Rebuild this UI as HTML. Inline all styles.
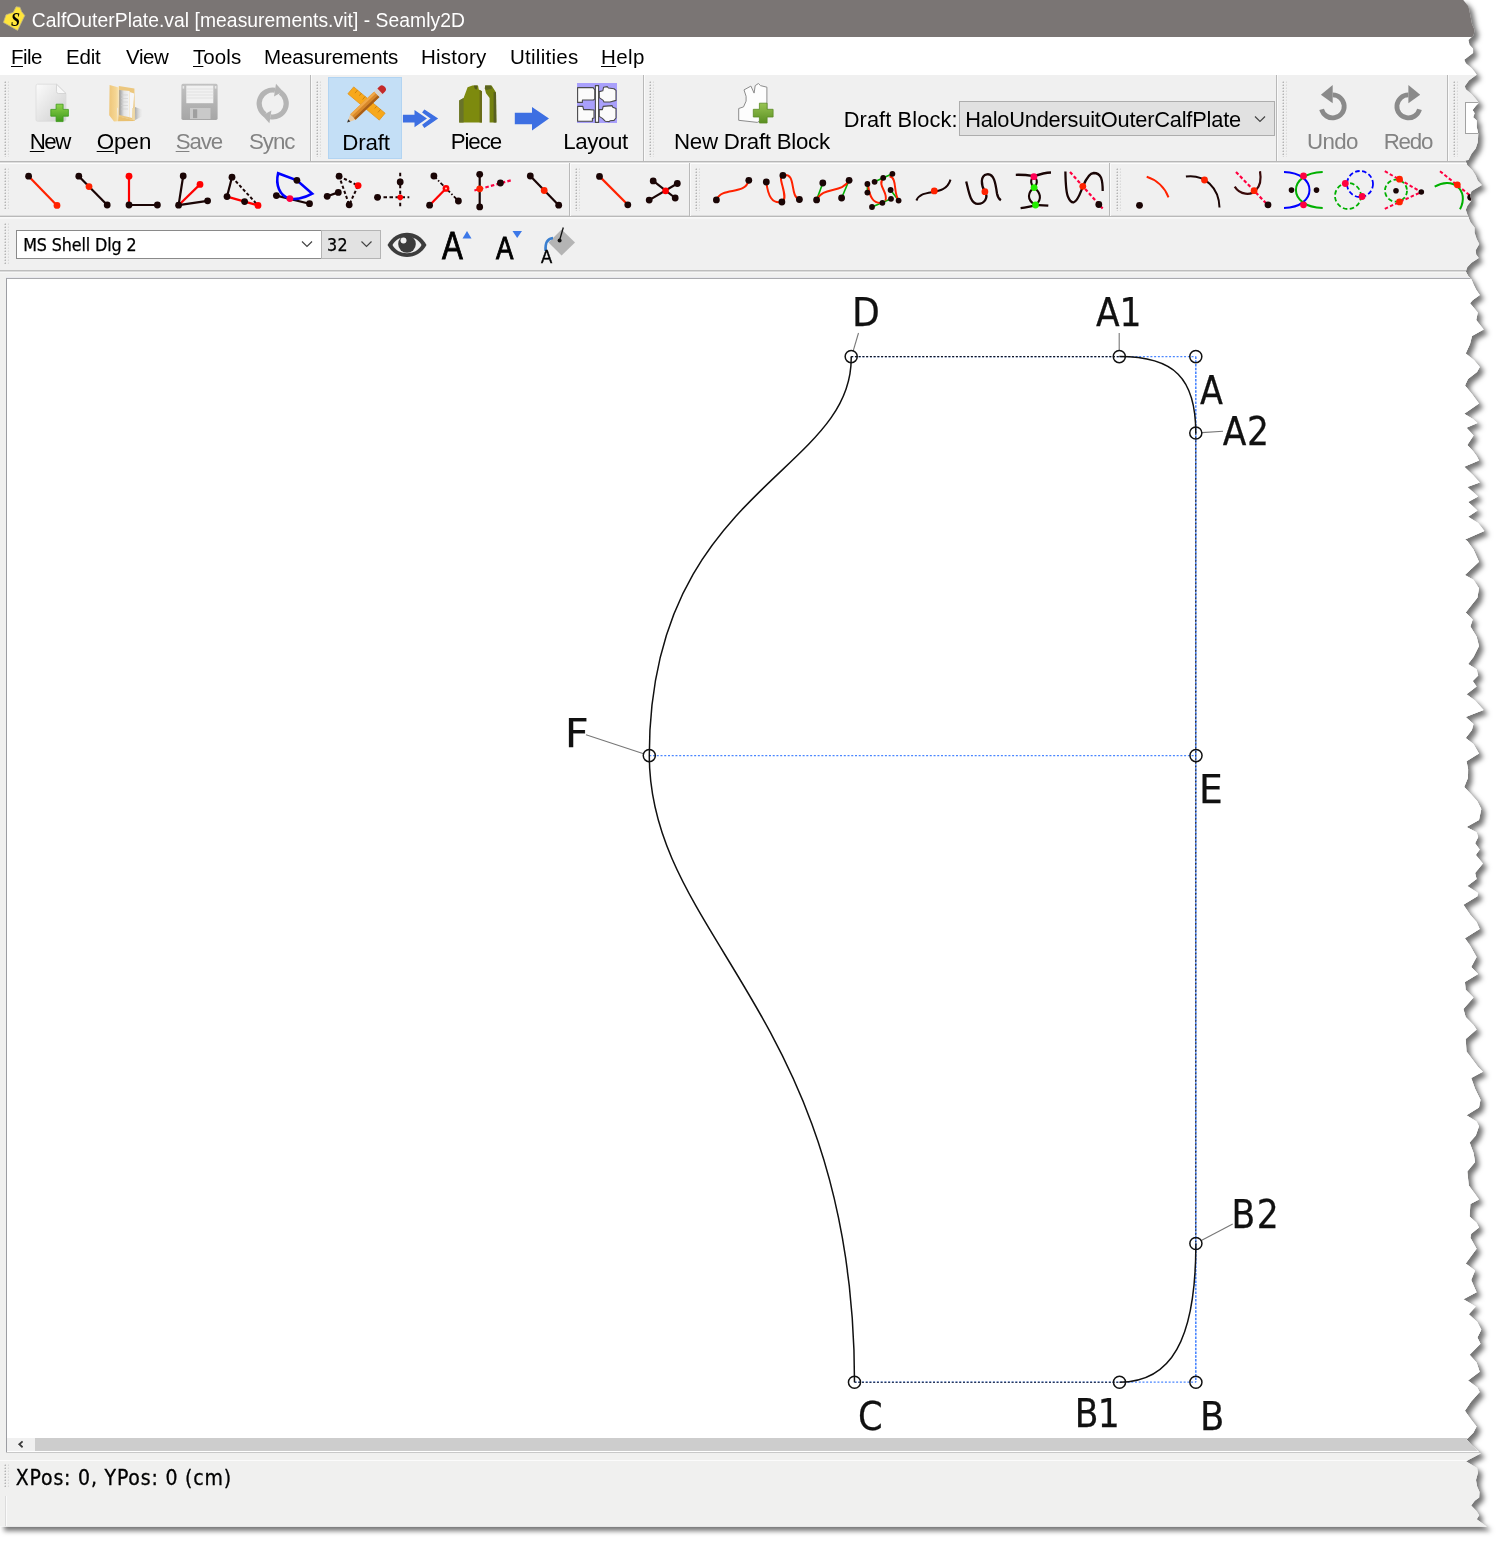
<!DOCTYPE html>
<html><head><meta charset="utf-8"><title>CalfOuterPlate.val [measurements.vit] - Seamly2D</title>
<style>
html,body{margin:0;padding:0;background:#fff;}
body{width:1500px;height:1541px;overflow:hidden;position:relative;font-family:"Liberation Sans",sans-serif;}
#w{position:absolute;left:0;top:0;width:1500px;height:1541px;overflow:hidden;background:#fff;}
.a{position:absolute;}
.t{position:absolute;white-space:nowrap;display:block;}
.t u{text-decoration:underline;text-decoration-thickness:1.2px;text-underline-offset:1.7px;}
.hd{position:absolute;width:6px;background-image:radial-gradient(circle at 1.2px 1.2px,#b4b4b4 0.45px,transparent 1.05px),radial-gradient(circle at 4.4px 1.2px,#dadada 0.45px,transparent 1.05px);background-size:6px 3px;}
svg{position:absolute;left:0;top:0;overflow:visible;}
#sh{position:absolute;left:0;top:0;width:1500px;height:1541px;filter:drop-shadow(4px 4px 2.8px rgba(0,0,0,0.54));}
#win{position:absolute;left:0;top:0;width:1500px;height:1541px;background:#f0f0f0;clip-path:polygon(0px 0px, 1463.2px 0.0px, 1468.4px 6.2px, 1470.0px 13.5px, 1472.0px 23.9px, 1474.6px 30.1px, 1473.6px 35.3px, 1468.4px 40.0px, 1469.5px 44.7px, 1473.1px 48.8px, 1473.1px 53.0px, 1464.3px 59.7px, 1465.8px 63.3px, 1471.5px 68.0px, 1474.6px 71.7px, 1476.7px 74.8px, 1468.9px 80.5px, 1464.8px 86.2px, 1465.8px 89.3px, 1471.5px 94.0px, 1475.7px 98.7px, 1478.8px 102.8px, 1475.7px 105.9px, 1472.6px 110.1px, 1474.6px 113.2px, 1473.1px 117.3px, 1476.7px 120.5px, 1476.7px 126.7px, 1478.3px 134.0px, 1477.8px 142.3px, 1475.7px 148.5px, 1471.5px 153.7px, 1468.4px 160.0px, 1465.3px 160.5px, 1467.4px 165.2px, 1472.6px 170.4px, 1475.7px 175.6px, 1477.8px 180.8px, 1481.9px 184.9px, 1471.5px 191.2px, 1470.0px 195.3px, 1471.5px 200.5px, 1467.4px 205.7px, 1465.8px 209.8px, 1467.9px 216.1px, 1470.5px 222.3px, 1474.6px 227.5px, 1474.6px 232.7px, 1476.7px 238.9px, 1479.3px 244.1px, 1475.7px 250.3px, 1476.2px 254.5px, 1478.8px 258.1px, 1471.5px 262.8px, 1467.4px 267.0px, 1465.8px 271.6px, 1468.4px 276.3px, 1471.5px 279.4px, 1473.6px 284.6px, 1476.2px 289.8px, 1479.8px 295.0px, 1472.6px 300.2px, 1470.0px 303.3px, 1473.6px 307.5px, 1477.8px 312.6px, 1476.2px 320.0px, 1483.7px 329.4px, 1472.0px 336.0px, 1470.0px 344.0px, 1465.7px 353.6px, 1474.0px 360.0px, 1479.8px 366.9px, 1477.0px 372.0px, 1468.0px 379.0px, 1465.0px 385.6px, 1472.0px 394.0px, 1479.0px 403.5px, 1464.2px 413.7px, 1473.0px 419.0px, 1477.5px 423.1px, 1466.5px 427.8px, 1473.6px 435.6px, 1467.3px 445.0px, 1473.0px 451.0px, 1476.7px 455.9px, 1479.0px 460.6px, 1464.2px 466.8px, 1473.0px 475.0px, 1479.8px 482.5px, 1467.3px 487.1px, 1478.2px 496.5px, 1468.1px 502.0px, 1477.5px 510.6px, 1468.1px 516.8px, 1478.2px 523.0px, 1484.4px 530.9px, 1465.0px 539.4px, 1467.3px 541.0px, 1473.5px 549.4px, 1479.0px 561.8px, 1464.9px 575.1px, 1473.5px 579.7px, 1479.0px 588.3px, 1477.4px 597.7px, 1471.2px 605.5px, 1465.7px 612.5px, 1472.7px 619.5px, 1470.4px 626.5px, 1476.6px 636.6px, 1479.0px 646.0px, 1473.5px 656.9px, 1468.1px 663.9px, 1476.6px 669.3px, 1478.2px 675.6px, 1472.7px 681.0px, 1476.6px 686.5px, 1466.5px 694.3px, 1475.1px 700.5px, 1483.6px 709.9px, 1465.7px 716.9px, 1473.5px 723.9px, 1471.9px 730.1px, 1465.7px 737.9px, 1473.5px 744.1px, 1479.0px 753.5px, 1466.5px 761.3px, 1468.1px 769.1px, 1468.0px 777.8px, 1464.2px 787.1px, 1471.2px 794.2px, 1477.4px 801.2px, 1481.3px 809.0px, 1479.0px 819.9px, 1466.5px 826.9px, 1476.6px 832.3px, 1478.2px 837.0px, 1475.1px 843.2px, 1479.7px 849.5px, 1475.8px 854.9px, 1482.9px 863.5px, 1475.1px 872.9px, 1476.6px 879.1px, 1467.3px 886.1px, 1478.2px 893.1px, 1477.4px 896.2px, 1463.4px 904.8px, 1470.4px 914.9px, 1476.6px 921.9px, 1479.7px 929.0px, 1464.9px 938.3px, 1470.4px 946.1px, 1476.6px 957.0px, 1471.2px 967.1px, 1478.2px 974.1px, 1464.9px 981.9px, 1465.7px 989.7px, 1473.5px 997.5px, 1463.4px 1009.0px, 1465.7px 1017.1px, 1473.5px 1024.9px, 1476.6px 1029.6px, 1465.7px 1039.0px, 1466.5px 1051.4px, 1473.5px 1060.8px, 1478.2px 1067.0px, 1482.9px 1071.7px, 1471.2px 1077.9px, 1475.1px 1088.8px, 1480.5px 1099.7px, 1479.0px 1107.5px, 1466.5px 1115.3px, 1476.6px 1121.6px, 1479.0px 1126.2px, 1475.8px 1135.6px, 1469.6px 1142.6px, 1473.5px 1152.7px, 1475.1px 1162.1px, 1467.3px 1171.4px, 1468.8px 1185.4px, 1475.1px 1194.0px, 1479.0px 1199.5px, 1470.4px 1204.1px, 1469.6px 1216.6px, 1476.6px 1222.8px, 1479.0px 1227.5px, 1471.2px 1233.8px, 1470.4px 1237.8px, 1476.6px 1248.7px, 1465.7px 1263.5px, 1475.1px 1270.5px, 1471.2px 1279.9px, 1476.6px 1292.3px, 1463.4px 1299.3px, 1475.8px 1306.4px, 1468.8px 1314.2px, 1477.4px 1321.9px, 1481.3px 1329.7px, 1477.4px 1337.5px, 1480.5px 1343.8px, 1469.6px 1354.7px, 1476.6px 1362.5px, 1479.7px 1371.8px, 1468.0px 1380.4px, 1477.4px 1387.4px, 1479.7px 1392.1px, 1471.2px 1401.4px, 1464.9px 1410.8px, 1470.4px 1418.6px, 1476.6px 1426.4px, 1473.5px 1432.6px, 1466.5px 1439.6px, 1472.0px 1445.6px, 1480.8px 1453.6px, 1466.0px 1461.2px, 1477.2px 1468.0px, 1478.0px 1472.8px, 1476.0px 1480.0px, 1477.2px 1486.4px, 1479.6px 1492.0px, 1479.2px 1497.6px, 1474.8px 1500.8px, 1471.2px 1505.6px, 1476.8px 1511.2px, 1479.2px 1515.2px, 1476.8px 1519.2px, 1486.8px 1526.5px, 0px 1526.5px);}
</style></head><body><div id="w"><div id="sh"><div id="win">

<!-- title bar -->
<div class="a" style="left:0;top:0;width:1500px;height:37px;background:#7a7574;"></div>
<!-- menu bar -->
<div class="a" style="left:0;top:37px;width:1500px;height:38px;background:#fff;"></div>
<!-- toolbars background -->
<div class="a" style="left:0;top:75px;width:1500px;height:203px;background:#f0f0f0;"></div>
<div class="a" style="left:0;top:161px;width:1500px;height:1px;background:#b7b7b7;"></div>
<div class="a" style="left:0;top:162px;width:1500px;height:1px;background:#dedede;"></div>
<div class="a" style="left:0;top:163px;width:1500px;height:1px;background:#fcfcfc;"></div>
<div class="a" style="left:0;top:215px;width:1500px;height:1px;background:#dcdcdc;"></div>
<div class="a" style="left:0;top:216px;width:1500px;height:1px;background:#b9b9b9;"></div>
<div class="a" style="left:0;top:217px;width:1500px;height:1px;background:#f9f9f9;"></div>
<div class="a" style="left:0;top:218px;width:1500px;height:1px;background:#f6f6f6;"></div>
<div class="a" style="left:0;top:270px;width:1500px;height:1px;background:#bdbdbd;"></div>
<div class="a" style="left:0;top:271px;width:1500px;height:1px;background:#dadada;"></div>
<div class="a" style="left:0;top:272px;width:1500px;height:1px;background:#f6f6f6;"></div>
<!-- toolbar 1 separators -->
<div class="a" style="left:310px;top:75px;width:1px;height:86px;background:#b9b9b9;"></div>
<div class="a" style="left:311px;top:75px;width:1px;height:86px;background:#fafafa;"></div>
<div class="a" style="left:643px;top:75px;width:1px;height:86px;background:#b9b9b9;"></div>
<div class="a" style="left:644px;top:75px;width:1px;height:86px;background:#fafafa;"></div>
<div class="a" style="left:1276px;top:75px;width:1px;height:86px;background:#b9b9b9;"></div>
<div class="a" style="left:1277px;top:75px;width:1px;height:86px;background:#fafafa;"></div>
<div class="a" style="left:1447px;top:75px;width:1px;height:86px;background:#b9b9b9;"></div>
<div class="a" style="left:1448px;top:75px;width:1px;height:86px;background:#fafafa;"></div>
<!-- row2 separators -->
<div class="a" style="left:569px;top:163px;width:1px;height:53px;background:#b9b9b9;"></div>
<div class="a" style="left:570px;top:163px;width:1px;height:53px;background:#fafafa;"></div>
<div class="a" style="left:689px;top:163px;width:1px;height:53px;background:#b9b9b9;"></div>
<div class="a" style="left:690px;top:163px;width:1px;height:53px;background:#fafafa;"></div>
<div class="a" style="left:1109px;top:163px;width:1px;height:53px;background:#b9b9b9;"></div>
<div class="a" style="left:1110px;top:163px;width:1px;height:53px;background:#fafafa;"></div>
<div class="hd" style="left:575px;top:168px;height:43px;"></div>
<div class="hd" style="left:695px;top:168px;height:43px;"></div>
<div class="hd" style="left:1116px;top:168px;height:43px;"></div>
<!-- handles -->
<div class="hd" style="left:4px;top:81px;height:76px;"></div>
<div class="hd" style="left:316px;top:81px;height:76px;"></div>
<div class="hd" style="left:649px;top:81px;height:76px;"></div>
<div class="hd" style="left:1282px;top:81px;height:76px;"></div>
<div class="hd" style="left:1453px;top:81px;height:76px;"></div>
<div class="hd" style="left:4px;top:168px;height:42px;"></div>
<div class="hd" style="left:4px;top:223px;height:42px;"></div>
<!-- Draft selected -->
<div class="a" style="left:328px;top:77px;width:74px;height:82px;background:#c4dff6;border:1px solid #b2d4f2;box-sizing:border-box;"></div>
<!-- draft block combo -->
<div class="a" style="left:959px;top:101px;width:316px;height:35px;background:#e1e1e1;border:1px solid #adadad;box-sizing:border-box;"></div>
<!-- little box at far right -->
<div class="a" style="left:1465px;top:102px;width:40px;height:31.5px;background:#fff;border:1px solid #a2a2a2;box-sizing:border-box;"></div>
<!-- font combo -->
<div class="a" style="left:16px;top:230px;width:306px;height:29px;background:#fff;border:1px solid #8a8a8a;box-sizing:border-box;"></div>
<div class="a" style="left:321px;top:230px;width:60px;height:29px;background:#e2e2e2;border:1px solid #b4b4b4;box-sizing:border-box;"></div>
<!-- canvas frame -->
<div class="a" style="left:0;top:273px;width:1500px;height:1260px;background:#f0f0ef;"></div>
<div class="a" style="left:6px;top:277px;width:1500px;height:1px;background:#e9e9ef;"></div>
<div class="a" style="left:6px;top:278px;width:1500px;height:1175px;background:#fff;border:1px solid #9c9da2;border-top-color:#a9aaae;border-bottom-color:#a0a0a0;box-sizing:border-box;"></div>
<!-- scrollbar -->
<div class="a" style="left:7px;top:1438px;width:1493px;height:13px;background:#cdcdcd;"></div>
<div class="a" style="left:7px;top:1438px;width:28px;height:13px;background:#f0f0f0;"></div>
<div class="a" style="left:6px;top:1452px;width:1494px;height:1px;background:#c8c8c8;"></div>
<!-- status bar -->
<div class="a" style="left:0;top:1459.5px;width:1500px;height:1px;background:#fbfbfb;"></div>
<div class="hd" style="left:4px;top:1464px;height:23px;"></div>
<div class="a" style="left:5px;top:1496px;width:1px;height:30px;background:#dcdcdc;"></div>
<div class="a" style="left:6px;top:1496px;width:1px;height:30px;background:#fafafa;"></div>
<div class="a" style="left:0;top:1525.5px;width:1500px;height:1px;background:#fcfcfc;"></div>

<svg width="1500" height="1541" viewBox="0 0 1500 1541" fill="none" stroke-linecap="butt">
<path d="M28.6 176.2L57 205.4" stroke="#ff2200" stroke-width="2.2"/>
<circle cx="28.6" cy="176.2" r="3.4" fill="#1a0505"/>
<circle cx="57" cy="205.4" r="3.4" fill="#ff2200"/>
<path d="M78.8 176.2L107.2 205" stroke="#1a0505" stroke-width="2.2"/>
<circle cx="78.8" cy="176.2" r="3.4" fill="#1a0505"/>
<circle cx="107.2" cy="205" r="3.4" fill="#1a0505"/>
<circle cx="89" cy="186.6" r="3.4" fill="#ff2200"/>
<path d="M129 176.2L129 205" stroke="#ff0000" stroke-width="2.2"/>
<path d="M129 205L157.4 205" stroke="#1a0505" stroke-width="2.2"/>
<circle cx="129" cy="176.2" r="3.4" fill="#ff0000"/>
<circle cx="129" cy="205" r="3.4" fill="#1a0505"/>
<circle cx="157.4" cy="205" r="3.4" fill="#1a0505"/>
<path d="M178.6 205.2L183.2 176" stroke="#1a0505" stroke-width="2.2"/>
<path d="M178.6 205.2L207.6 200.8" stroke="#1a0505" stroke-width="2.2"/>
<path d="M178.6 205.2L200 184.4" stroke="#ff0000" stroke-width="2.2"/>
<circle cx="183.2" cy="176" r="3.4" fill="#1a0505"/>
<circle cx="207.6" cy="200.8" r="3.4" fill="#1a0505"/>
<circle cx="178.6" cy="205.2" r="3.4" fill="#1a0505"/>
<circle cx="200" cy="184.4" r="3.4" fill="#ff0000"/>
<path d="M232 177.2L227 196.6" stroke="#1a0505" stroke-width="2.2"/>
<path d="M227 196.6L258 205.4" stroke="#ff0000" stroke-width="2.2"/>
<path d="M232 177.2L258 205.4" stroke="#1a0505" stroke-width="2" stroke-dasharray="3.2 2.2"/>
<circle cx="232" cy="177.2" r="3.4" fill="#1a0505"/>
<circle cx="227" cy="196.6" r="3.4" fill="#1a0505"/>
<circle cx="244.6" cy="201.6" r="3.4" fill="#1a0505"/>
<circle cx="258" cy="205.4" r="3.4" fill="#ff0000"/>
<path d="M276.4 195.6L309.5 203.7" stroke="#1a0505" stroke-width="2.2"/>
<path d="M278.1 173.2L296.9 180.3L312.3 193.7C303 199 294 199.5 289.9 198.6C279 196 275.5 184 278.1 173.2Z" stroke="#0000ff" stroke-width="2.6"/>
<circle cx="296.9" cy="180.3" r="3.4" fill="#1a0505"/>
<circle cx="276.4" cy="195.6" r="3.4" fill="#1a0505"/>
<circle cx="309.5" cy="203.7" r="3.4" fill="#1a0505"/>
<circle cx="289.9" cy="198.6" r="3.4" fill="#ff0040"/>
<path d="M339.1 176.2L358.1 185.6L349.2 204.8Z" stroke="#1a0505" stroke-width="2" stroke-dasharray="3.2 2.2"/>
<path d="M327.2 196.3L338.3 192.4" stroke="#1a0505" stroke-width="2.2"/>
<circle cx="339.1" cy="176.2" r="3.4" fill="#1a0505"/>
<circle cx="349.2" cy="204.8" r="3.4" fill="#1a0505"/>
<circle cx="327.2" cy="196.3" r="3.4" fill="#1a0505"/>
<circle cx="338.3" cy="192.4" r="3.4" fill="#1a0505"/>
<circle cx="358.1" cy="185.6" r="3.4" fill="#ff0000"/>
<path d="M400.2 172.8L400.2 206.5" stroke="#1a0505" stroke-width="2" stroke-dasharray="3.5 2.5"/>
<path d="M377.5 197.3L409.3 197.3" stroke="#1a0505" stroke-width="2" stroke-dasharray="3.5 2.5"/>
<circle cx="400.2" cy="182" r="3.4" fill="#1a0505"/>
<circle cx="377.5" cy="197.3" r="3.4" fill="#1a0505"/>
<circle cx="400.2" cy="197.3" r="2.8" fill="#ff0000"/>
<path d="M433.9 176L458.4 201" stroke="#1a0505" stroke-width="1.8" stroke-dasharray="4 2 1.5 2"/>
<path d="M429.6 205.2L446 188.4" stroke="#ff0000" stroke-width="2.2"/>
<circle cx="433.9" cy="176" r="3.4" fill="#1a0505"/>
<circle cx="458.4" cy="201" r="3.4" fill="#1a0505"/>
<circle cx="429.6" cy="205.2" r="3.4" fill="#1a0505"/>
<circle cx="446" cy="188.4" r="3.4" fill="#ff0000"/>
<circle cx="446" cy="188.4" r="1" fill="#ffd0c0"/>
<path d="M479.7 174.3L479.7 206.9" stroke="#1a0505" stroke-width="2.2"/>
<path d="M474.4 190.5L512.8 179.8" stroke="#ff0040" stroke-width="2.2" stroke-dasharray="3.5 2.2"/>
<circle cx="479.7" cy="174.3" r="3.4" fill="#1a0505"/>
<circle cx="479.7" cy="206.9" r="3.4" fill="#1a0505"/>
<circle cx="500.4" cy="183" r="3.4" fill="#1a0505"/>
<circle cx="479.7" cy="188.8" r="3.4" fill="#ff2200"/>
<path d="M530.3 176L558.7 205.2" stroke="#1a0505" stroke-width="2.2"/>
<circle cx="530.3" cy="176" r="3.4" fill="#1a0505"/>
<circle cx="558.7" cy="205.2" r="3.4" fill="#1a0505"/>
<circle cx="544.2" cy="190.5" r="3.4" fill="#ff2200"/>
<path d="M599.5 176.4L627.8 204.8" stroke="#ff2200" stroke-width="2.2"/>
<circle cx="599.5" cy="176.4" r="3.4" fill="#1a0505"/>
<circle cx="627.8" cy="204.8" r="3.4" fill="#1a0505"/>
<path d="M653.2 180.9L675.2 198" stroke="#1a0505" stroke-width="2.2"/>
<path d="M677.3 183.5L649.2 200.1" stroke="#1a0505" stroke-width="2.2"/>
<circle cx="653.2" cy="180.9" r="3.4" fill="#1a0505"/>
<circle cx="677.3" cy="183.5" r="3.4" fill="#1a0505"/>
<circle cx="649.2" cy="200.1" r="3.4" fill="#1a0505"/>
<circle cx="675.2" cy="198" r="3.4" fill="#1a0505"/>
<circle cx="665.6" cy="190.9" r="3.3" fill="#ff0000"/>
<path d="M716.4 199.9C722 186 745 196 748.8 180.3" stroke="#ff2200" stroke-width="2"/>
<circle cx="716.4" cy="199.9" r="3.4" fill="#1a0505"/>
<circle cx="748.8" cy="180.3" r="3.4" fill="#1a0505"/>
<path d="M766.3 182C768 196 772 204 781.9 202C790 198 776 176 782.9 175.4C797 172 789 196 799.4 199.5" stroke="#ff2200" stroke-width="2"/>
<circle cx="766.3" cy="182" r="3.4" fill="#1a0505"/>
<circle cx="782.9" cy="175.4" r="3.4" fill="#1a0505"/>
<circle cx="781.9" cy="202" r="3.4" fill="#1a0505"/>
<circle cx="799.4" cy="199.5" r="3.4" fill="#1a0505"/>
<path d="M816.6 199.9L822.8 183" stroke="#00b000" stroke-width="1.6"/>
<path d="M841.6 198L849.1 180.3" stroke="#00b000" stroke-width="1.6"/>
<path d="M816.6 199.9C823 186 842 194 849.1 180.3" stroke="#ff2200" stroke-width="2"/>
<circle cx="822.8" cy="183" r="3.4" fill="#1a0505"/>
<circle cx="849.1" cy="180.3" r="3.4" fill="#1a0505"/>
<circle cx="816.6" cy="199.9" r="3.4" fill="#1a0505"/>
<circle cx="841.6" cy="198" r="3.4" fill="#1a0505"/>
<path d="M867.4 184L867.4 192.6M874.6 181.8L892.4 173.8M890.6 190L898.6 200.6M872 207L891 198.8" stroke="#00b000" stroke-width="1.6"/>
<path d="M868.2 186C869.5 196 873 204.5 882.4 202.8M883.2 178.5C876.5 185 889.5 194 885.2 200.6M889.5 176.3C897.5 178 893 192 898.6 200.6" stroke="#ff2200" stroke-width="2"/>
<circle cx="867.4" cy="184" r="2.9" fill="#1a0505"/>
<circle cx="874.6" cy="181.8" r="2.9" fill="#1a0505"/>
<circle cx="883.2" cy="177.8" r="2.9" fill="#1a0505"/>
<circle cx="892.4" cy="173.8" r="2.9" fill="#1a0505"/>
<circle cx="867.4" cy="192.6" r="2.9" fill="#1a0505"/>
<circle cx="890.6" cy="190" r="2.9" fill="#1a0505"/>
<circle cx="891" cy="198.8" r="2.9" fill="#1a0505"/>
<circle cx="898.6" cy="200.6" r="2.9" fill="#1a0505"/>
<circle cx="882.4" cy="202.8" r="2.9" fill="#1a0505"/>
<circle cx="872" cy="207" r="2.9" fill="#1a0505"/>
<path d="M916.4 200.5C922 187 945 198 950.5 179.6" stroke="#1a0505" stroke-width="2"/>
<circle cx="934.3" cy="190.9" r="3.4" fill="#ff2200"/>
<path d="M966.2 181.5C968.5 190 970 203.9 977.9 203.9C985 203.9 988.5 197 984.9 191.7C981 185 980 175.5 987 174.3C994 173.3 995.5 183 997 193.5C997.6 197 999 199 1000.9 200.2" stroke="#1a0505" stroke-width="2.3"/>
<circle cx="984.9" cy="191.7" r="3.4" fill="#ff2200"/>
<path d="M1015.8 174.8C1022 174.6 1028 175.2 1033.9 176.2C1039 174.5 1045 172.8 1051 172.5M1020.6 208.2C1026 207.6 1031 206 1035.5 205.3C1040 205 1044 205.3 1048.3 205.7" stroke="#1a0505" stroke-width="2.3"/>
<path d="M1033.9 176.7C1029.5 180 1031 185 1034.1 187.6C1037 185 1038.5 180 1033.9 176.7M1034.1 187.6C1028 192 1026 200 1035.5 205C1043 199 1040 192 1034.1 187.6" stroke="#1a0505" stroke-width="2.1"/>
<circle cx="1033.9" cy="176.7" r="3.4" fill="#ff0055"/>
<circle cx="1034.1" cy="187.6" r="3.4" fill="#22ee00"/>
<circle cx="1035.5" cy="205" r="3.4" fill="#22ee00"/>
<path d="M1065.4 171.6C1065.6 184 1066 193 1068.1 197C1070 201.5 1072 202.5 1073.6 202.3C1078 201.5 1080.5 192 1083 186.3C1086 179 1089 173.2 1093.7 173C1098 173 1100 175.5 1101.1 177.8C1102.3 181 1102.7 186 1102.7 191.1" stroke="#1a0505" stroke-width="2.3"/>
<path d="M1070 171.9L1103.3 209.3" stroke="#ff0040" stroke-width="2.2" stroke-dasharray="3.5 2.2"/>
<circle cx="1082.8" cy="186.3" r="3.4" fill="#ff2200"/>
<circle cx="1098.8" cy="204.5" r="3.4" fill="#1a0505"/>
<path d="M1146.7 176.8C1157 180 1165 188 1168.5 197.3" stroke="#ff2200" stroke-width="2"/>
<circle cx="1139.5" cy="205.3" r="3.4" fill="#1a0505"/>
<path d="M1185.9 176.5C1205 174 1219 188 1219.5 207.5" stroke="#1a0505" stroke-width="2"/>
<circle cx="1204.5" cy="180" r="3.4" fill="#ff2200"/>
<path d="M1234.7 186.7C1240 195 1251 196 1256 190C1261 185 1261 177 1260 171.2" stroke="#3a0a0a" stroke-width="2.2"/>
<path d="M1236 172L1270.7 208" stroke="#ff0040" stroke-width="2.2" stroke-dasharray="3.5 2.2"/>
<circle cx="1254.1" cy="190.7" r="3.4" fill="#ff2200"/>
<circle cx="1268" cy="204.8" r="3.4" fill="#1a0505"/>
<path d="M1284 172C1318 173 1318 207 1284 208" stroke="#0000ff" stroke-width="2"/>
<path d="M1322.7 172C1287 173 1287 207 1322.7 208" stroke="#00b000" stroke-width="2"/>
<circle cx="1291.5" cy="190.1" r="2.8" fill="#1a0505"/>
<circle cx="1316.5" cy="190.1" r="2.8" fill="#1a0505"/>
<circle cx="1303.5" cy="176" r="3.4" fill="#ff0040"/>
<circle cx="1303.5" cy="204.8" r="3.4" fill="#ff0040"/>
<circle cx="1360" cy="184" r="13" stroke="#0000ff" stroke-width="1.8" stroke-dasharray="4.5 2.5"/>
<circle cx="1348" cy="196" r="13" stroke="#00b000" stroke-width="1.8" stroke-dasharray="4.5 2.5"/>
<circle cx="1345.3" cy="183.5" r="3.4" fill="#ff0040"/>
<circle cx="1362.1" cy="196.5" r="3.4" fill="#ff0040"/>
<circle cx="1396" cy="190.7" r="11" stroke="#00b000" stroke-width="1.8" stroke-dasharray="4.5 2.5"/>
<path d="M1384.8 171.2L1421.3 192" stroke="#ff0040" stroke-width="2" stroke-dasharray="3.5 2.2"/>
<path d="M1384.8 208.8L1421.3 192" stroke="#ff0040" stroke-width="2" stroke-dasharray="3.5 2.2"/>
<circle cx="1396" cy="190.7" r="2.8" fill="#1a0505"/>
<circle cx="1421.3" cy="192" r="2.8" fill="#1a0505"/>
<circle cx="1399.5" cy="179.2" r="3.4" fill="#ff2200"/>
<circle cx="1399.5" cy="201.9" r="3.4" fill="#ff2200"/>
<path d="M1434.7 186.7C1452 176 1470 190 1460 209.3" stroke="#00b000" stroke-width="2"/>
<path d="M1440 171.2L1470.7 196" stroke="#ff0040" stroke-width="2" stroke-dasharray="3.5 2.2"/>
<circle cx="1457.3" cy="184.8" r="3.4" fill="#ff2200"/>
<circle cx="1470.7" cy="197.3" r="3.4" fill="#1a0505"/>
<path d="M302 241.5L307 246.5L312 241.5" stroke="#444" stroke-width="1.2"/>
<path d="M361.5 241.5L366.5 246.5L371.5 241.5" stroke="#444" stroke-width="1.2"/>
<path d="M1255 116.5L1260 121.5L1265 116.5" stroke="#444" stroke-width="1.2"/>
<path d="M387.5 245C396 228.5 418 228.5 426.5 245C418 261 396 261 387.5 245Z" fill="#3c3c3c"/>
<path d="M392.5 245C398 234 416 234 421.5 245C416 256 398 256 392.5 245Z" fill="#f0f0f0"/>
<circle cx="407" cy="244" r="8.8" fill="#3c3c3c"/><circle cx="403.5" cy="240.5" r="3" fill="#f0f0f0"/>
<path d="M462.5 238.5L467 231L471.5 238.5Z" fill="#3c78e8"/>
<path d="M512.5 231L522 231L517.2 238Z" fill="#3c78e8"/>
<path d="M561.6 229.5L575 242.5L561.6 255.5L548.5 242.5Z" fill="#b4b4b4"/>
<path d="M545.6 251C545 243 548 238.5 553 238" stroke="#3a7fd0" stroke-width="2.6"/>
<path d="M563.3 227.5L559.8 239.5" stroke="#111" stroke-width="1.3"/>
<circle cx="559.6" cy="240.5" r="2" fill="#111"/>
<path d="M3.4 22.4L6 14.8L13.2 12.4L16 6.8L20 7.2L21.6 11.6L24.8 15.6L17.6 30.4Z" fill="#ffe53b" stroke="#b9b08a" stroke-width="0.8"/>
<path d="M22.6 1441.4L19.3 1444.3L22.6 1447.2" stroke="#3c3c3c" stroke-width="1.8"/>
</svg>
<svg width="1500" height="1541" viewBox="0 0 1500 1541" fill="none">
<defs>
<linearGradient id="gp" x1="0" y1="0" x2="1" y2="1"><stop offset="0" stop-color="#fbfbfb"/><stop offset="1" stop-color="#cfcfcf"/></linearGradient>
<linearGradient id="gg" x1="0" y1="0" x2="0" y2="1"><stop offset="0" stop-color="#8ed24a"/><stop offset="1" stop-color="#3f9a1c"/></linearGradient>
<linearGradient id="gg2" x1="0" y1="0" x2="0" y2="1"><stop offset="0" stop-color="#98c452"/><stop offset="1" stop-color="#5a8f22"/></linearGradient>
<linearGradient id="gf" x1="0" y1="0" x2="1" y2="0"><stop offset="0" stop-color="#f6dc9e"/><stop offset="1" stop-color="#e0b465"/></linearGradient>
<linearGradient id="gs" x1="0" y1="0" x2="0" y2="1"><stop offset="0" stop-color="#c2c2c2"/><stop offset="1" stop-color="#a6a6a6"/></linearGradient>
</defs>
<path d="M37.5 84.2H56.5L66 93.5V119.5Q66 121.3 64 121.3H37.5Q36 121.3 36 119.5V86Q36 84.2 37.5 84.2Z" fill="url(#gp)" stroke="#dcdcdc" stroke-width="0.8"/>
<path d="M56.5 84.2V91.5Q56.5 93.5 58.5 93.5H66Z" fill="#f8f8f8" stroke="#cfcfcf" stroke-width="0.8"/>
<path d="M56.1 104.2H63.1V109.4H68.4V116.2H63.1V121.6H56.1V116.2H50.8V109.4H56.1Z" fill="url(#gg)" stroke="#3c9a1a" stroke-width="0.8" stroke-linejoin="round"/>
<defs><linearGradient id="gpp" x1="0" y1="0" x2="1" y2="0"><stop offset="0" stop-color="#9a9a9a"/><stop offset="0.45" stop-color="#e4e4e4"/><stop offset="1" stop-color="#f4f4f4"/></linearGradient><linearGradient id="gsh" x1="0" y1="0" x2="1" y2="0"><stop offset="0" stop-color="#a8a8a8"/><stop offset="1" stop-color="#e6e6e6" stop-opacity="0.2"/></linearGradient><linearGradient id="gfl" x1="0" y1="0" x2="1" y2="0"><stop offset="0" stop-color="#eec67a"/><stop offset="0.7" stop-color="#f5d694"/><stop offset="1" stop-color="#f9e5b4"/></linearGradient></defs>
<path d="M135 107L142 109.5V116.5L135.2 120Z" fill="url(#gsh)"/>
<path d="M118.8 86L134.4 88.4L134.9 120.4L118.4 116.4Z" fill="#ecc77e"/>
<path d="M119.3 90L129.6 91V117.2L119.3 115Z" fill="url(#gpp)"/>
<path d="M129.6 92L134.2 93.5L133 110L132 118L129.6 117.2Z" fill="#f6f6f8"/>
<path d="M121 95h7M121 98.5h7M121 102h7M121 105.5h7M121 109h7" stroke="#cdcdcd" stroke-width="0.9" opacity="0.7"/>
<path d="M118.4 116.2L134.9 120.4V121L118 121.2Z" fill="#e9c070"/>
<path d="M132.2 108L134.8 108.5V120.4L132.2 119.6Z" fill="#eed9a8"/>
<path d="M109.6 85L118.8 87.6L118.3 107L117.2 108.5L118 121.2L114 121.6L109.2 115.2Z" fill="url(#gfl)"/>
<path d="M183 83.8H216Q217.6 83.8 217.6 85.5V118.3Q217.6 120 216 120H183Q181.4 120 181.4 118.3V85.5Q181.4 83.8 183 83.8Z" fill="url(#gs)"/>
<rect x="186.3" y="85.6" width="27" height="17.6" fill="#f1f1f1"/>
<path d="M186.3 89h27M186.3 92h27M186.3 95h27M186.3 98h27" stroke="#dedede" stroke-width="0.8"/>
<rect x="190" y="108" width="20.5" height="11" fill="#c9c9c9"/><rect x="193" y="109.3" width="4.2" height="8.8" fill="#9f9f9f"/>
<rect x="182.6" y="86" width="1.6" height="2.6" fill="#e8e8e8"/><rect x="214.8" y="86" width="1.6" height="2.6" fill="#e8e8e8"/>
<g stroke="#b4b4b4" stroke-width="5.2" fill="none"><path d="M265 114.6A13.5 13.5 0 0 1 275 90.2"/><path d="M280.4 92.4A13.5 13.5 0 0 1 270.4 116.8"/></g>
<path d="M276 83.8L274 96.6L283 91.6Z" fill="#b4b4b4"/><path d="M269.4 123.2L271.4 110.4L262.4 115.4Z" fill="#b4b4b4"/>
<g transform="rotate(40 366.5 103.5)"><rect x="346" y="99" width="41" height="9" fill="#f7a81b" stroke="#e08f10" stroke-width="0.7"/><path d="M351 99v4M356 99v3M361 99v4M366 99v3M371 99v4M376 99v3M381 99v4" stroke="#c77d0a" stroke-width="0.8"/></g>
<g transform="rotate(-43.5 366 104.5)"><path d="M340 104.5L348 100.7V108.3Z" fill="#e9c9a0"/><path d="M340 104.5L343 103V106Z" fill="#333"/><rect x="348" y="100.7" width="33" height="7.6" fill="#d8882a"/><rect x="348" y="100.7" width="33" height="2.5" fill="#f0a848"/><rect x="348" y="106" width="33" height="2.3" fill="#a85f18"/><rect x="381" y="100.7" width="4.3" height="7.6" fill="#d4d4d4"/><path d="M385.3 100.7H388.5Q391.8 100.7 391.8 104.5Q391.8 108.3 388.5 108.3H385.3Z" fill="#c42a2a"/></g>
<path d="M402.9 114.8H414.5V110.1L427 118.6L414.5 127.2V122.5H402.9Z" fill="#3d6fe2"/>
<path d="M424.5 110.3L437 118.6L424.5 127L423 125L431.5 118.6L423 112.3Z" fill="#3d6fe2" stroke="#3d6fe2" stroke-width="1.3" stroke-linejoin="miter"/>
<path d="M514.8 112.7H532V106.9L549 118.6L532 130.4V124.3H514.8Z" fill="#3d6fe2"/>
<path d="M459.2 122.4V100.4L463.6 98L467.6 87.2L472.4 85.4H478L478.8 89.6L482 91.2V122.4Z" fill="#7d8a0e"/>
<path d="M459.2 122.4V100.4L463.6 98V122.4Z" fill="#69732a"/>
<path d="M479.6 90L482 91.2V122.4H479.6Z" fill="#6a6c18"/>
<path d="M473.6 85.4H477.4L477 89.4L475 89Z" fill="#565b1c"/>
<path d="M485.2 85.6H491.6L494 89.2L496 92.4L496.4 122.4H489.6V98L486 93.2L484.8 88.4Z" fill="#74820f"/>
<path d="M493.6 92L496 92.4L496.4 122.4H493.6Z" fill="#585f20"/>
<path d="M485.2 85.6H491L492 88.5L486.5 90L484.8 88.4Z" fill="#5b6420"/>
<rect x="577" y="83" width="40" height="40" fill="#a9a0fb"/>
<g fill="#fbfbfb" stroke="#4a4a4a" stroke-width="1.1" stroke-linejoin="round"><path d="M577.6 87.6H593.2L594.8 90V98.8L593.6 100H582.4V102.4H577.6Z"/><path d="M577.6 106.4H582.8L583.6 109.6H589.2L594 110V118L592.4 118.4V121.2H577.6Z"/><path d="M599.2 91.6L602.8 90.8L603.6 87.2L607.2 86.6L608.4 88L614 88.8L616 90.4V100.4L610 102H604L603.2 100.4L599.2 97.6Z"/><path d="M599.2 109.6H602.4L603.2 106.4L612 105.6L612.8 107.2L616 108.4V118L614 120.4L610 120.8L609.2 121.6L605.2 121.2L602.4 118.4L599.2 116.4Z"/><rect x="595.4" y="85.6" width="3.2" height="36.8"/></g>
<path d="M738.7 120.3V108.5L743.5 106.9L746.1 101.1V96.3L744 89.9L750.9 86.1L754.1 93.1L755.2 85.6L758.4 83.5L760.5 85.6L766.9 87.2V117L757.3 122.4Z" fill="#fdfdfd" stroke="#8c8c8c" stroke-width="1" stroke-linejoin="round"/>
<path d="M759.4 103.2H767.1V109.3H773.1V117H767.1V123H759.4V117H753.3V109.3H759.4Z" fill="url(#gg2)" stroke="#5b8c25" stroke-width="0.8" stroke-linejoin="round"/>
<path d="M1332.7 94.9A11.5 11.5 0 1 1 1321.6 109.4" stroke="#8a8a8a" stroke-width="4.8"/><path d="M1320.9 94.7L1332.7 85.1V103.2Z" fill="#8a8a8a"/>
<path d="M1408.4 94.9A11.5 11.5 0 1 0 1419.5 109.4" stroke="#8a8a8a" stroke-width="4.8"/><path d="M1420.2 94.7L1408.4 85.1V103.2Z" fill="#8a8a8a"/>
</svg>
<svg width="1500" height="1541" viewBox="0 0 1500 1541" fill="none">
<g stroke="#4a86ff" stroke-width="1.3" stroke-dasharray="2 1.74">
<path d="M851.2 356.6H1195.8"/>
<path d="M1195.8 356.6V1382.2" stroke-width="1.6" stroke-dasharray="2.5 1.24"/>
<path d="M854.5 1382.2H1195.9"/>
<path d="M649.3 755.6H1196"/>
</g>
<g stroke="#15151a" stroke-width="1.1" stroke-dasharray="2 1.74">
<path d="M851.2 356.6H1119.3"/>
<path d="M1195.8 433V1243.5"/>
<path d="M854.5 1382.2H1119.5"/>
</g>
<g stroke="#111" stroke-width="1.5">
<path d="M851.2 356.6C853.6 474.6 649.3 488.2 649.3 755.6C649.3 937.7 854.5 1015 854.5 1382.2"/>
<path d="M1119.3 356.6C1174.2 356.6 1195.8 378.1 1195.8 433"/>
<path d="M1195.9 1243.5C1195.9 1341 1170.5 1382.2 1119.5 1382.2"/>
</g>
<g stroke="#777" stroke-width="1.1">
<path d="M858.5 333L853.2 350.8"/>
<path d="M1119.2 333V350.7"/>
<path d="M1201.8 432.6L1223 431.3"/>
<path d="M586 734.8L643.6 753.8"/>
<path d="M1201.3 1240.6L1232.7 1224.1"/>
</g>
<g stroke="#111" stroke-width="1.5" fill="none">
<circle cx="851.2" cy="356.6" r="6.05"/><circle cx="1119.3" cy="356.6" r="6.05"/><circle cx="1195.8" cy="356.6" r="6.05"/>
<circle cx="1195.8" cy="433" r="6.05"/><circle cx="649.3" cy="755.6" r="6.05"/><circle cx="1196" cy="755.6" r="6.05"/>
<circle cx="1195.9" cy="1243.5" r="6.05"/><circle cx="854.5" cy="1382.2" r="6.05"/><circle cx="1119.5" cy="1382.2" r="6.05"/><circle cx="1195.9" cy="1382.2" r="6.05"/>
</g>
</svg>

<span class="t" id="t0" style='left:31.80px;top:2.20px;height:38.6px;line-height:38.6px;font-size:19.3px;color:#fff;font-family:"Liberation Sans", sans-serif;letter-spacing:0.050px;'>CalfOuterPlate.val [measurements.vit] - Seamly2D</span>
<span class="t" id="t1" style='left:11.00px;top:36.00px;height:41.0px;line-height:41.0px;font-size:20.5px;color:#000;font-family:"Liberation Sans", sans-serif;letter-spacing:-0.544px;'><u>F</u>ile</span>
<span class="t" id="t2" style='left:66.00px;top:36.00px;height:41.0px;line-height:41.0px;font-size:20.5px;color:#000;font-family:"Liberation Sans", sans-serif;letter-spacing:-0.210px;'>Edit</span>
<span class="t" id="t3" style='left:126.00px;top:36.00px;height:41.0px;line-height:41.0px;font-size:20.5px;color:#000;font-family:"Liberation Sans", sans-serif;letter-spacing:-0.420px;'>View</span>
<span class="t" id="t4" style='left:193.00px;top:36.00px;height:41.0px;line-height:41.0px;font-size:20.5px;color:#000;font-family:"Liberation Sans", sans-serif;letter-spacing:0.098px;'><u>T</u>ools</span>
<span class="t" id="t5" style='left:264.00px;top:36.00px;height:41.0px;line-height:41.0px;font-size:20.5px;color:#000;font-family:"Liberation Sans", sans-serif;letter-spacing:-0.121px;'>Measurements</span>
<span class="t" id="t6" style='left:421.00px;top:36.00px;height:41.0px;line-height:41.0px;font-size:20.5px;color:#000;font-family:"Liberation Sans", sans-serif;letter-spacing:0.245px;'>History</span>
<span class="t" id="t7" style='left:510.00px;top:36.00px;height:41.0px;line-height:41.0px;font-size:20.5px;color:#000;font-family:"Liberation Sans", sans-serif;letter-spacing:0.273px;'>Utilities</span>
<span class="t" id="t8" style='left:601.00px;top:36.00px;height:41.0px;line-height:41.0px;font-size:20.5px;color:#000;font-family:"Liberation Sans", sans-serif;letter-spacing:0.413px;'><u>H</u>elp</span>
<span class="t" id="t9" style='left:29.80px;top:120.02px;height:44.6px;line-height:44.6px;font-size:22.3px;color:#000;font-family:"Liberation Sans", sans-serif;letter-spacing:-1.551px;'><u>N</u>ew</span>
<span class="t" id="t10" style='left:96.70px;top:120.02px;height:44.6px;line-height:44.6px;font-size:22.3px;color:#000;font-family:"Liberation Sans", sans-serif;letter-spacing:0.052px;'><u>O</u>pen</span>
<span class="t" id="t11" style='left:175.70px;top:120.02px;height:44.6px;line-height:44.6px;font-size:22.3px;color:#838383;font-family:"Liberation Sans", sans-serif;letter-spacing:-1.140px;'><u>S</u>ave</span>
<span class="t" id="t12" style='left:249.00px;top:120.02px;height:44.6px;line-height:44.6px;font-size:22.3px;color:#838383;font-family:"Liberation Sans", sans-serif;letter-spacing:-1.040px;'>Sync</span>
<span class="t" id="t13" style='left:342.30px;top:121.02px;height:44.6px;line-height:44.6px;font-size:22.3px;color:#000;font-family:"Liberation Sans", sans-serif;letter-spacing:-0.181px;'>Draft</span>
<span class="t" id="t14" style='left:450.70px;top:120.02px;height:44.6px;line-height:44.6px;font-size:22.3px;color:#000;font-family:"Liberation Sans", sans-serif;letter-spacing:-1.094px;'>Piece</span>
<span class="t" id="t15" style='left:563.30px;top:120.02px;height:44.6px;line-height:44.6px;font-size:22.3px;color:#000;font-family:"Liberation Sans", sans-serif;letter-spacing:-0.410px;'>Layout</span>
<span class="t" id="t16" style='left:674.00px;top:120.02px;height:44.6px;line-height:44.6px;font-size:22.3px;color:#000;font-family:"Liberation Sans", sans-serif;letter-spacing:-0.263px;'>New Draft Block</span>
<span class="t" id="t17" style='left:843.70px;top:98.30px;height:43.6px;line-height:43.6px;font-size:21.8px;color:#000;font-family:"Liberation Sans", sans-serif;letter-spacing:0.101px;'>Draft Block:</span>
<span class="t" id="t18" style='left:965.20px;top:98.30px;height:43.6px;line-height:43.6px;font-size:21.8px;color:#000;font-family:"Liberation Sans", sans-serif;letter-spacing:-0.198px;'>HaloUndersuitOuterCalfPlate</span>
<span class="t" id="t19" style='left:1307.00px;top:120.02px;height:44.6px;line-height:44.6px;font-size:22.3px;color:#838383;font-family:"Liberation Sans", sans-serif;letter-spacing:-0.634px;'>Undo</span>
<span class="t" id="t20" style='left:1383.70px;top:120.02px;height:44.6px;line-height:44.6px;font-size:22.3px;color:#838383;font-family:"Liberation Sans", sans-serif;letter-spacing:-1.201px;'>Redo</span>
<span class="t" id="t21" style='left:23.20px;top:228.40px;height:35.4px;line-height:35.4px;font-size:17.7px;color:#000;font-family:"DejaVu Sans Condensed", "DejaVu Sans", "Liberation Sans", sans-serif;letter-spacing:-0.093px;-webkit-text-stroke:0.25px #000;'>MS Shell Dlg 2</span>
<span class="t" id="t22" style='left:327.00px;top:228.40px;height:35.4px;line-height:35.4px;font-size:17.7px;color:#000;font-family:"DejaVu Sans Condensed", "DejaVu Sans", "Liberation Sans", sans-serif;letter-spacing:0.478px;-webkit-text-stroke:0.25px #000;'>32</span>
<span class="t" id="t23" style='left:441.90px;top:205.71px;height:78.6px;line-height:78.6px;font-size:39.3px;color:#000;font-family:"Liberation Sans", sans-serif;letter-spacing:0.000px;transform:scaleX(0.7926);transform-origin:0 0;-webkit-text-stroke:0.9px #000;'>A</span>
<span class="t" id="t24" style='left:495.90px;top:217.71px;height:61.2px;line-height:61.2px;font-size:30.6px;color:#000;font-family:"Liberation Sans", sans-serif;letter-spacing:0.000px;transform:scaleX(0.8524);transform-origin:0 0;-webkit-text-stroke:0.9px #000;'>A</span>
<span class="t" id="t25" style='left:540.60px;top:240.12px;height:35.6px;line-height:35.6px;font-size:17.8px;color:#000;font-family:"Liberation Sans", sans-serif;letter-spacing:0.000px;transform:scaleX(0.9417);transform-origin:0 0;-webkit-text-stroke:0.4px #000;'>A</span>
<span class="t" id="t26" style='left:10.50px;top:2.01px;height:36.0px;line-height:36.0px;font-size:18px;color:#000;font-family:"Liberation Serif", serif;letter-spacing:0.000px;transform:scaleX(0.9000);transform-origin:0 0;font-weight:bold;font-style:italic;'>S</span>
<span class="t" id="t27" style='left:15.80px;top:1457.02px;height:42.0px;line-height:42.0px;font-size:21px;color:#000;font-family:"DejaVu Sans Condensed", "DejaVu Sans", "Liberation Sans", sans-serif;letter-spacing:0.820px;-webkit-text-stroke:0.3px #000;'>XPos: 0, YPos: 0 (cm)</span>
<span class="t" id="t28" style='left:851.86px;top:274.61px;height:76.8px;line-height:76.8px;font-size:38.4px;color:#111;font-family:"DejaVu Sans Condensed", "DejaVu Sans", "Liberation Sans", sans-serif;letter-spacing:0.000px;transform:scaleX(1.0455);transform-origin:0 0;-webkit-text-stroke:0.25px #111;'>D</span>
<span class="t" id="t29" style='left:1096.00px;top:274.71px;height:76.8px;line-height:76.8px;font-size:38.4px;color:#111;font-family:"DejaVu Sans Condensed", "DejaVu Sans", "Liberation Sans", sans-serif;letter-spacing:-0.219px;-webkit-text-stroke:0.25px #111;'>A1</span>
<span class="t" id="t30" style='left:1200.00px;top:353.02px;height:76.8px;line-height:76.8px;font-size:38.4px;color:#111;font-family:"DejaVu Sans Condensed", "DejaVu Sans", "Liberation Sans", sans-serif;letter-spacing:0.000px;transform:scaleX(0.9708);transform-origin:0 0;-webkit-text-stroke:0.25px #111;'>A</span>
<span class="t" id="t31" style='left:1222.70px;top:394.02px;height:76.8px;line-height:76.8px;font-size:38.4px;color:#111;font-family:"DejaVu Sans Condensed", "DejaVu Sans", "Liberation Sans", sans-serif;letter-spacing:0.681px;-webkit-text-stroke:0.25px #111;'>A2</span>
<span class="t" id="t32" style='left:565.04px;top:695.80px;height:76.8px;line-height:76.8px;font-size:38.4px;color:#111;font-family:"DejaVu Sans Condensed", "DejaVu Sans", "Liberation Sans", sans-serif;letter-spacing:0.000px;transform:scaleX(1.1867);transform-origin:0 0;-webkit-text-stroke:0.25px #111;'>F</span>
<span class="t" id="t33" style='left:1199.24px;top:752.02px;height:76.8px;line-height:76.8px;font-size:38.4px;color:#111;font-family:"DejaVu Sans Condensed", "DejaVu Sans", "Liberation Sans", sans-serif;letter-spacing:0.000px;transform:scaleX(1.0882);transform-origin:0 0;-webkit-text-stroke:0.25px #111;'>E</span>
<span class="t" id="t34" style='left:1231.40px;top:1176.91px;height:76.8px;line-height:76.8px;font-size:38.4px;color:#111;font-family:"DejaVu Sans Condensed", "DejaVu Sans", "Liberation Sans", sans-serif;letter-spacing:1.606px;-webkit-text-stroke:0.25px #111;'>B2</span>
<span class="t" id="t35" style='left:858.18px;top:1378.71px;height:76.8px;line-height:76.8px;font-size:38.4px;color:#111;font-family:"DejaVu Sans Condensed", "DejaVu Sans", "Liberation Sans", sans-serif;letter-spacing:0.000px;transform:scaleX(1.0227);transform-origin:0 0;-webkit-text-stroke:0.25px #111;'>C</span>
<span class="t" id="t36" style='left:1074.80px;top:1376.41px;height:76.8px;line-height:76.8px;font-size:38.4px;color:#111;font-family:"DejaVu Sans Condensed", "DejaVu Sans", "Liberation Sans", sans-serif;letter-spacing:-0.694px;-webkit-text-stroke:0.25px #111;'>B1</span>
<span class="t" id="t37" style='left:1199.62px;top:1378.61px;height:76.8px;line-height:76.8px;font-size:38.4px;color:#111;font-family:"DejaVu Sans Condensed", "DejaVu Sans", "Liberation Sans", sans-serif;letter-spacing:0.000px;transform:scaleX(1.0263);transform-origin:0 0;-webkit-text-stroke:0.25px #111;'>B</span>
</div></div>

</div></body></html>
